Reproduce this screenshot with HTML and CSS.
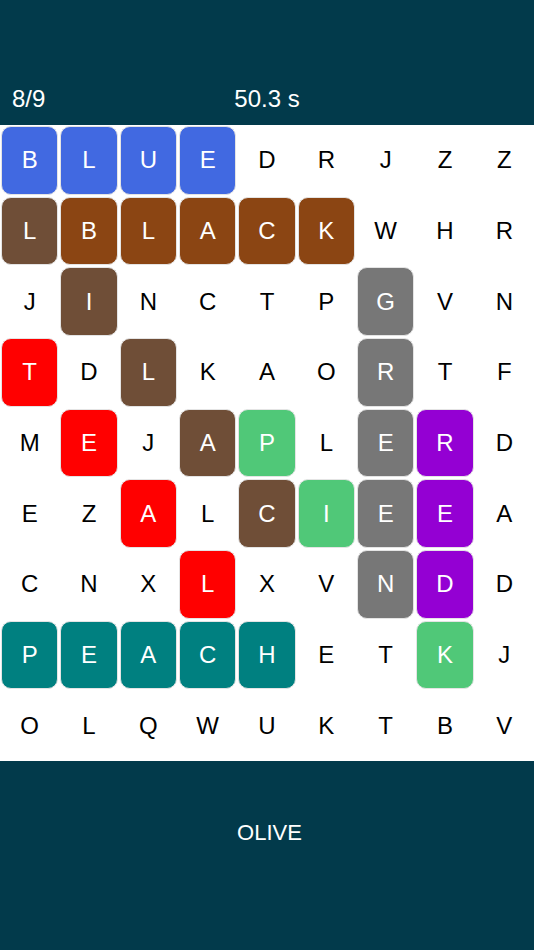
FILE: index.html
```html
<!DOCTYPE html>
<html>
<head>
<meta charset="utf-8">
<link rel="stylesheet" href="styles.css">
</head>
<body>
<div class="app">
  <header class="top">
    <div class="score">8/9</div>
    <div class="timer">50.3 s</div>
    <div></div>
  </header>
  <main class="board">
    <div class="cell"><span class="tile blue">B</span></div>
    <div class="cell"><span class="tile blue">L</span></div>
    <div class="cell"><span class="tile blue">U</span></div>
    <div class="cell"><span class="tile blue">E</span></div>
    <div class="cell"><span class="tile">D</span></div>
    <div class="cell"><span class="tile">R</span></div>
    <div class="cell"><span class="tile">J</span></div>
    <div class="cell"><span class="tile">Z</span></div>
    <div class="cell"><span class="tile">Z</span></div>

    <div class="cell"><span class="tile coffee">L</span></div>
    <div class="cell"><span class="tile brown">B</span></div>
    <div class="cell"><span class="tile brown">L</span></div>
    <div class="cell"><span class="tile brown">A</span></div>
    <div class="cell"><span class="tile brown">C</span></div>
    <div class="cell"><span class="tile brown">K</span></div>
    <div class="cell"><span class="tile">W</span></div>
    <div class="cell"><span class="tile">H</span></div>
    <div class="cell"><span class="tile">R</span></div>

    <div class="cell"><span class="tile">J</span></div>
    <div class="cell"><span class="tile coffee">I</span></div>
    <div class="cell"><span class="tile">N</span></div>
    <div class="cell"><span class="tile">C</span></div>
    <div class="cell"><span class="tile">T</span></div>
    <div class="cell"><span class="tile">P</span></div>
    <div class="cell"><span class="tile gray">G</span></div>
    <div class="cell"><span class="tile">V</span></div>
    <div class="cell"><span class="tile">N</span></div>

    <div class="cell"><span class="tile red">T</span></div>
    <div class="cell"><span class="tile">D</span></div>
    <div class="cell"><span class="tile coffee">L</span></div>
    <div class="cell"><span class="tile">K</span></div>
    <div class="cell"><span class="tile">A</span></div>
    <div class="cell"><span class="tile">O</span></div>
    <div class="cell"><span class="tile gray">R</span></div>
    <div class="cell"><span class="tile">T</span></div>
    <div class="cell"><span class="tile">F</span></div>

    <div class="cell"><span class="tile">M</span></div>
    <div class="cell"><span class="tile red">E</span></div>
    <div class="cell"><span class="tile">J</span></div>
    <div class="cell"><span class="tile coffee">A</span></div>
    <div class="cell"><span class="tile green">P</span></div>
    <div class="cell"><span class="tile">L</span></div>
    <div class="cell"><span class="tile gray">E</span></div>
    <div class="cell"><span class="tile purple">R</span></div>
    <div class="cell"><span class="tile">D</span></div>

    <div class="cell"><span class="tile">E</span></div>
    <div class="cell"><span class="tile">Z</span></div>
    <div class="cell"><span class="tile red">A</span></div>
    <div class="cell"><span class="tile">L</span></div>
    <div class="cell"><span class="tile coffee">C</span></div>
    <div class="cell"><span class="tile green">I</span></div>
    <div class="cell"><span class="tile gray">E</span></div>
    <div class="cell"><span class="tile purple">E</span></div>
    <div class="cell"><span class="tile">A</span></div>

    <div class="cell"><span class="tile">C</span></div>
    <div class="cell"><span class="tile">N</span></div>
    <div class="cell"><span class="tile">X</span></div>
    <div class="cell"><span class="tile red">L</span></div>
    <div class="cell"><span class="tile">X</span></div>
    <div class="cell"><span class="tile">V</span></div>
    <div class="cell"><span class="tile gray">N</span></div>
    <div class="cell"><span class="tile purple">D</span></div>
    <div class="cell"><span class="tile">D</span></div>

    <div class="cell"><span class="tile teal">P</span></div>
    <div class="cell"><span class="tile teal">E</span></div>
    <div class="cell"><span class="tile teal">A</span></div>
    <div class="cell"><span class="tile teal">C</span></div>
    <div class="cell"><span class="tile teal">H</span></div>
    <div class="cell"><span class="tile">E</span></div>
    <div class="cell"><span class="tile">T</span></div>
    <div class="cell"><span class="tile green">K</span></div>
    <div class="cell"><span class="tile">J</span></div>

    <div class="cell"><span class="tile">O</span></div>
    <div class="cell"><span class="tile">L</span></div>
    <div class="cell"><span class="tile">Q</span></div>
    <div class="cell"><span class="tile">W</span></div>
    <div class="cell"><span class="tile">U</span></div>
    <div class="cell"><span class="tile">K</span></div>
    <div class="cell"><span class="tile">T</span></div>
    <div class="cell"><span class="tile">B</span></div>
    <div class="cell"><span class="tile">V</span></div>
  </main>
  <footer class="bottom">
    <div class="target">OLIVE</div>
  </footer>
</div>
</body>
</html>
```
FILE: styles.css
```css
html, body {
  margin: 0;
  padding: 0;
  background: #023a4b;
}
body {
  font-family: "Liberation Sans", Arial, sans-serif;
  color: #ffffff;
}
.app {
  width: 534px;
  height: 950px;
  display: flex;
  flex-direction: column;
  background: #023a4b;
}
.top {
  height: 125px;
  box-sizing: border-box;
  display: grid;
  grid-template-columns: 1fr auto 1fr;
  align-items: end;
  padding: 0 12px 12px 12px;
  font-size: 24px;
  line-height: 28px;
}
.score {
  text-align: left;
}
.timer {
  text-align: center;
}
.board {
  height: 636px;
  background: #ffffff;
  display: grid;
  grid-template-columns: repeat(9, 1fr);
  grid-template-rows: repeat(9, 1fr);
}
.cell {
  padding: 1px;
  display: flex;
}
.tile {
  flex: 1;
  display: flex;
  align-items: center;
  justify-content: center;
  border: 1px solid transparent;
  border-radius: 10px;
  font-size: 24px;
  color: #000000;
}
.tile.blue, .tile.brown, .tile.coffee, .tile.gray, .tile.red,
.tile.green, .tile.purple, .tile.teal {
  color: #ffffff;
  border-color: #e4e4e4;
}
.blue { background: #4169e1; }
.brown { background: #8b4513; }
.coffee { background: #6f4e37; }
.gray { background: #777777; }
.red { background: #ff0000; }
.green { background: #50c878; }
.purple { background: #9400d3; }
.teal { background: #008080; }
.bottom {
  flex: 1;
  box-sizing: border-box;
  padding: 59px 0 0 5px;
  text-align: center;
  font-size: 22px;
  line-height: 26px;
}
```
